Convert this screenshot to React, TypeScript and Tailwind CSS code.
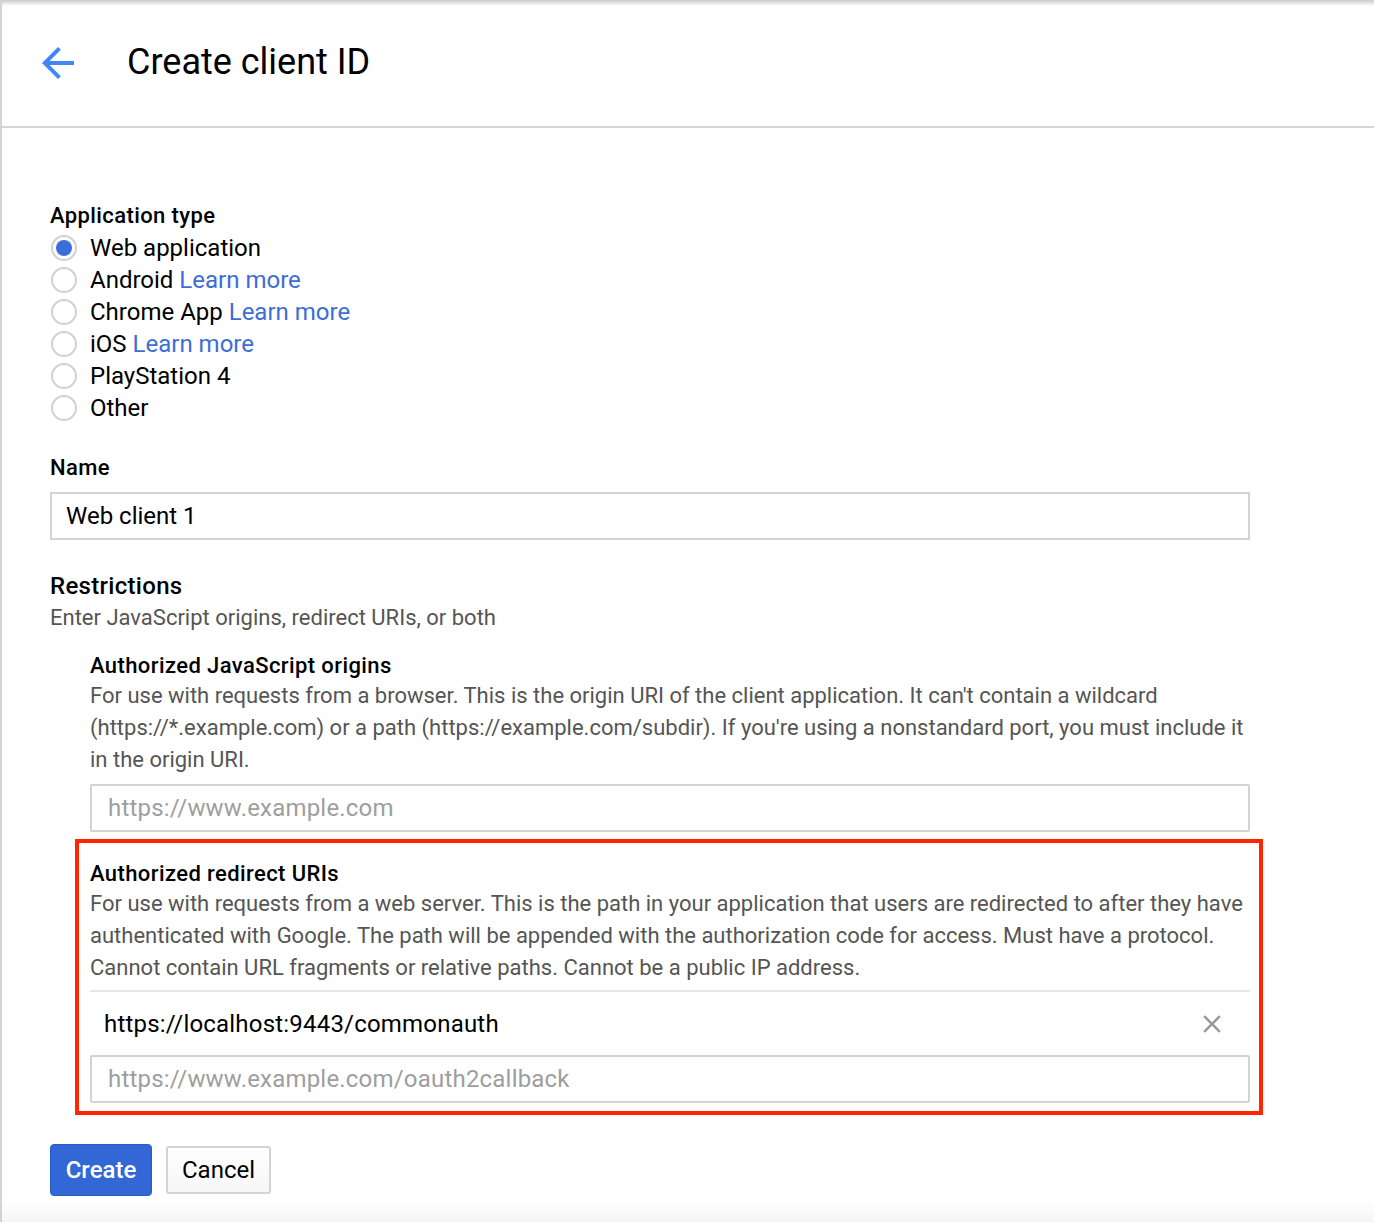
import React from "react";

const font = { fontFamily: "Roboto, 'Noto Sans', Arial, sans-serif" };

const types = [
  { label: "Web application", more: false },
  { label: "Android", more: true },
  { label: "Chrome App", more: true },
  { label: "iOS", more: true },
  { label: "PlayStation 4", more: false },
  { label: "Other", more: false },
];

function Radio({ checked }: { checked: boolean }) {
  return (
    <span className="flex h-[26px] w-[26px] shrink-0 items-center justify-center rounded-full border-2 border-[#d0d0d0] bg-white">
      {checked && <span className="h-[16px] w-[16px] rounded-full bg-[#3b6ed6]" />}
    </span>
  );
}

export default function App() {
  return (
    <div style={font} className="min-h-[1222px] w-full border-l-2 border-[#d4d4d4] bg-white text-[#212121]">
      {/* Header */}
      <div className="relative h-[128px] border-b-2 border-[#d6d6d6]">
        <div className="absolute inset-x-0 top-0 h-[6px] bg-gradient-to-b from-[#c9c9c9] to-white" />
        <div className="flex h-full items-center pb-[4px]">
          <svg width="48" height="48" viewBox="0 0 24 24" className="ml-[32px] mt-[4px]">
            <path d="M20 11H7.83l5.59-5.59L12 4l-8 8 8 8 1.41-1.41L7.83 13H20v-2z" fill="#4285f4" />
          </svg>
          <h1 className="ml-[45px] mt-[2px] text-[36px] font-normal leading-none text-black">Create client ID</h1>
        </div>
      </div>

      {/* Body */}
      <div className="pl-[48px] pt-[72px]">
        <div className="text-[22px] font-medium leading-[32px] tracking-[0.4px] text-black">Application type</div>
        <div className="flex flex-col">
          {types.map((t, i) => (
            <label key={t.label} className="flex h-[32px] items-center gap-[13px] pl-[1px]">
              <Radio checked={i === 0} />
              <span className="text-[24px] leading-[32px] text-black">
                {t.label}
                {t.more && <span className="text-[#3b6ed6]"> Learn more</span>}
              </span>
            </label>
          ))}
        </div>

        <div className="mt-[28px] text-[22px] font-medium leading-[32px] tracking-[0.4px] text-black">Name</div>
        <div className="mt-[8px] flex h-[48px] w-[1200px] items-center border-2 border-[#d3d3d3] pl-[14px] text-[24px] text-black">
          Web client 1
        </div>

        <div className="mt-[30px] text-[24px] font-medium leading-[32px] tracking-[0.3px] text-black">Restrictions</div>
        <div className="text-[22px] leading-[32px] text-[#555]">Enter JavaScript origins, redirect URIs, or both</div>

        <div className="ml-[40px] mt-[18px] w-[1160px]">
          <div className="text-[22px] font-medium leading-[28px] tracking-[0.4px] text-black">Authorized JavaScript origins</div>
          <p className="text-[22px] leading-[32px] text-[#555]">
            For use with requests from a browser. This is the origin URI of the client application. It can't contain a wildcard (https://*.example.com) or a path (https://example.com/subdir). If you're using a nonstandard port, you must include it in the origin URI.
          </p>
          <div className="mt-[8px] flex h-[48px] items-center rounded-[2px] border-2 border-[#d3d3d3] pl-[16px] text-[24px] tracking-[0.2px] text-[#9e9e9e]">
            https://www.example.com
          </div>
        </div>

        <div className="ml-[25px] mt-[7px] w-[1188px] border-4 border-[#ff2600] pb-[8px] pl-[11px] pr-[9px] pt-[17px]">
          <div className="text-[22px] font-medium leading-[28px] tracking-[0.4px] text-black">Authorized redirect URIs</div>
          <p className="text-[22px] leading-[32px] text-[#555]">
            For use with requests from a web server. This is the path in your application that users are redirected to after they have authenticated with Google. The path will be appended with the authorization code for access. Must have a protocol. Cannot contain URL fragments or relative paths. Cannot be a public IP address.
          </p>
          <div className="mt-[6px] flex h-[65px] items-center justify-between border-t-2 border-[#e6e6e6] pl-[14px] pr-[23px]">
            <span className="text-[24px] tracking-[0.2px] text-black">https://localhost:9443/commonauth</span>
            <svg width="30" height="30" viewBox="0 0 24 24">
              <path
                d="M19 6.41L17.59 5 12 10.59 6.41 5 5 6.41 10.59 12 5 17.59 6.41 19 12 13.41 17.59 19 19 17.59 13.41 12z"
                fill="#9a9a9a"
              />
            </svg>
          </div>
          <div className="flex h-[48px] items-center rounded-[2px] border-2 border-[#d3d3d3] pl-[16px] text-[24px] tracking-[0.2px] text-[#9e9e9e]">
            https://www.example.com/oauth2callback
          </div>
        </div>

        <div className="mt-[29px] flex items-center gap-[14px]">
          <button className="h-[52px] w-[102px] rounded-[4px] border border-[#2a5dc4] bg-[#3367d6] text-[24px] font-medium text-white">
            Create
          </button>
          <button className="h-[48px] w-[105px] rounded-[3px] border-2 border-[#d3d3d3] bg-gradient-to-b from-white to-[#f6f6f6] text-[24px] text-black">
            Cancel
          </button>
        </div>
      </div>
      <div className="mt-[4px] h-[26px] bg-gradient-to-b from-white to-[#f3f3f3]" />
    </div>
  );
}
